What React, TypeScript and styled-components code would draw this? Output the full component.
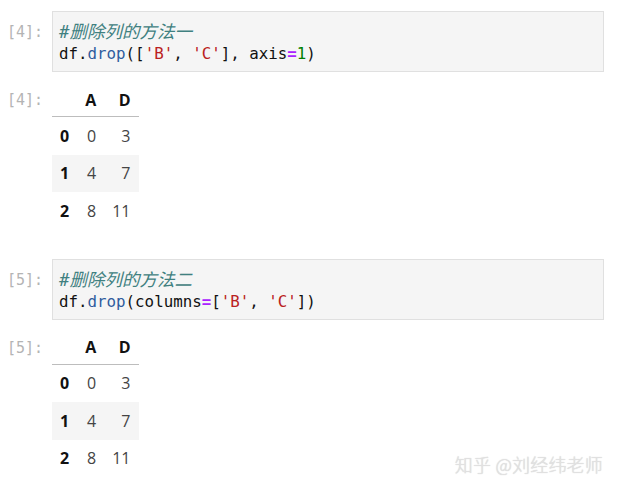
import React from "react";
import styled, { createGlobalStyle } from "styled-components";

const Global = createGlobalStyle`
  html, body { margin: 0; padding: 0; background: #ffffff; }
  body { width: 619px; height: 491px; overflow: hidden; }
`;

const Page = styled.div`
  position: relative;
  width: 619px;
  height: 491px;
  padding-top: 11px;
  box-sizing: border-box;
  display: flex;
  flex-direction: column;
`;

const Cell = styled.div<{ $gapAfter: number }>`
  display: flex;
  flex-direction: column;
  gap: 10px;
  margin-bottom: ${(p) => p.$gapAfter}px;
`;

const Row = styled.div`
  display: flex;
  flex-direction: row;
  align-items: flex-start;
`;

const Prompt = styled.div<{ $top: number }>`
  width: 52px;
  flex: none;
  box-sizing: border-box;
  padding-right: 9px;
  padding-top: ${(p) => p.$top}px;
  text-align: right;
  font-family: "DejaVu Sans Mono", "Liberation Mono", monospace;
  font-size: 15px;
  line-height: 21px;
  color: #b4b4b4;
`;

const CodeBox = styled.div`
  width: 552px;
  box-sizing: border-box;
  background: #f5f5f5;
  border: 1px solid #e0e0e0;
  padding: 10px 6px 7px 6px;
  font-family: "DejaVu Sans Mono", "Liberation Mono", monospace;
  font-size: 15.8px;
  line-height: 21px;
  color: #111;
  white-space: pre;
`;

const Line = styled.div``;

const Comment = styled.span`
  color: #408080;
  font-style: italic;
  font-family: "DejaVu Sans Mono", "Noto Sans CJK SC", monospace;
  font-size: 17.5px;
`;
const Prop = styled.span`
  color: #2f5c9e;
`;
const Str = styled.span`
  color: #ba2121;
`;
const Op = styled.span`
  color: #aa22ff;
  font-weight: bold;
`;
const Num = styled.span`
  color: #008000;
`;

const Table = styled.table`
  border-collapse: collapse;
  border-spacing: 0;
  font-family: "Open Sans", "Noto Sans", sans-serif;
  font-size: 16px;
  color: #333;
`;

const HeadCell = styled.th`
  text-align: right;
  font-weight: bold;
  color: #111;
  padding: 9.5px 8px 7.5px 8px;
  line-height: 17px;
  border-bottom: 1px solid #bdbdbd;
`;

const IndexCell = styled.th`
  text-align: right;
  font-weight: bold;
  color: #111;
  padding: 10.5px 8px 10px 8px;
  line-height: 17px;
`;

const DataCell = styled.td`
  text-align: right;
  padding: 10.5px 8px 10px 8px;
  line-height: 17px;
  color: #444;
`;

const BodyRow = styled.tr<{ $alt: boolean }>`
  background: ${(p) => (p.$alt ? "#f5f5f5" : "transparent")};
`;

const Watermark = styled.div`
  position: absolute;
  right: 16px;
  top: 453px;
  font-family: "Noto Sans CJK SC", sans-serif;
  font-weight: 300;
  font-size: 18px;
  line-height: 22px;
  color: #e2e2e2;
  text-shadow: 0 0 1px #c8c8c8;
  letter-spacing: 0.2px;
`;

const data = [
  { idx: "0", a: "0", d: "3" },
  { idx: "1", a: "4", d: "7" },
  { idx: "2", a: "8", d: "11" },
];

const Output: React.FC<{ n: number }> = ({ n }) => (
  <Row>
    <Prompt $top={8}>[{n}]:</Prompt>
    <Table>
      <thead>
        <tr>
          <HeadCell></HeadCell>
          <HeadCell>A</HeadCell>
          <HeadCell>D</HeadCell>
        </tr>
      </thead>
      <tbody>
        {data.map((r, i) => (
          <BodyRow key={r.idx} $alt={i === 1}>
            <IndexCell>{r.idx}</IndexCell>
            <DataCell>{r.a}</DataCell>
            <DataCell>{r.d}</DataCell>
          </BodyRow>
        ))}
      </tbody>
    </Table>
  </Row>
);

export default function App() {
  return (
    <>
      <Global />
      <Page>
        <Cell $gapAfter={29}>
          <Row>
            <Prompt $top={11}>[4]:</Prompt>
            <CodeBox>
              <Line>
                <Comment>#删除列的方法一</Comment>
              </Line>
              <Line>
                df.<Prop>drop</Prop>([<Str>'B'</Str>, <Str>'C'</Str>], axis
                <Op>=</Op>
                <Num>1</Num>)
              </Line>
            </CodeBox>
          </Row>
          <Output n={4} />
        </Cell>
        <Cell $gapAfter={0}>
          <Row>
            <Prompt $top={11}>[5]:</Prompt>
            <CodeBox>
              <Line>
                <Comment>#删除列的方法二</Comment>
              </Line>
              <Line>
                df.<Prop>drop</Prop>(columns<Op>=</Op>[<Str>'B'</Str>, <Str>'C'</Str>])
              </Line>
            </CodeBox>
          </Row>
          <Output n={5} />
        </Cell>
        <Watermark>知乎 @刘经纬老师</Watermark>
      </Page>
    </>
  );
}
